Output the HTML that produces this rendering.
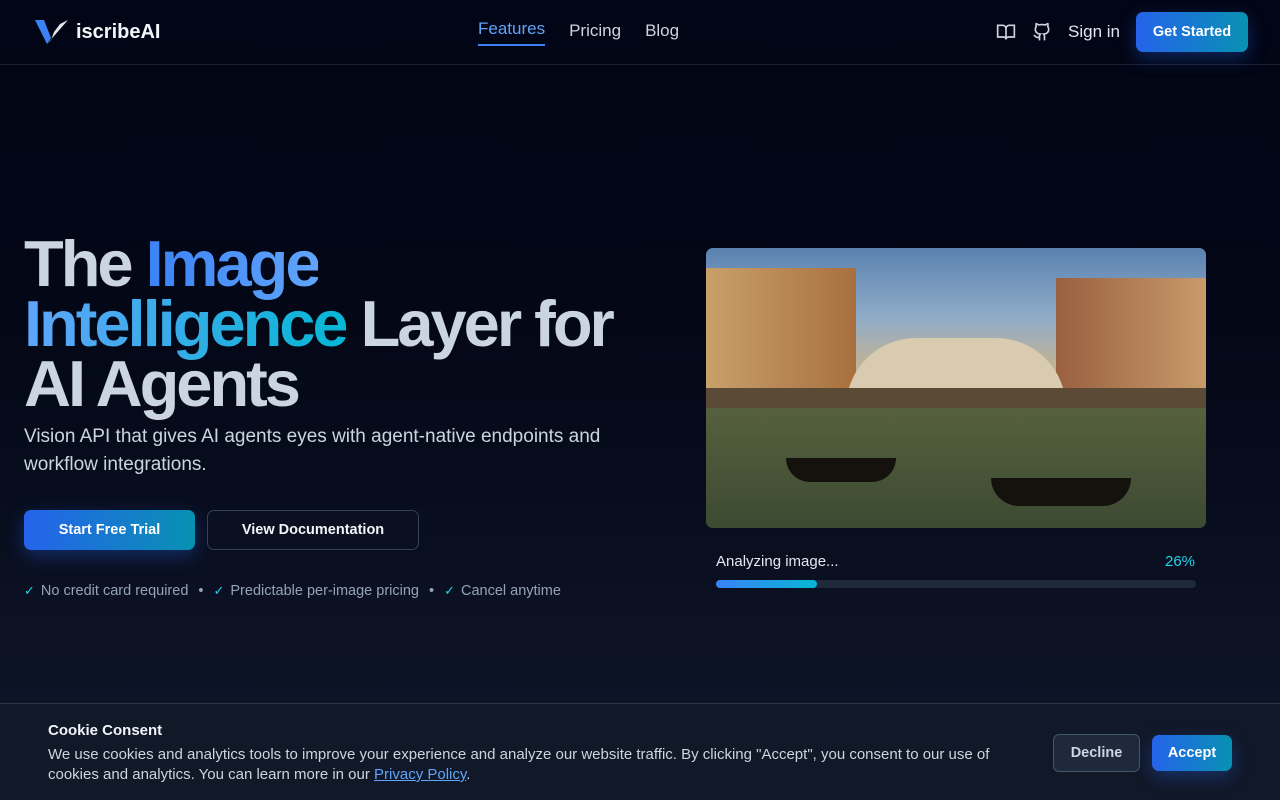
<!DOCTYPE html>
<html><head><meta charset="utf-8"><style>
*{margin:0;padding:0;box-sizing:border-box}
body{width:1280px;height:800px;overflow:hidden;font-family:"Liberation Sans",sans-serif;background:linear-gradient(180deg,#020515 0%,#030716 40%,#0c1224 80%,#0f1629 100%);color:#cbd5e1;position:relative}
.nav{position:absolute;top:0;left:0;right:0;height:65px;border-bottom:1px solid #1a1f2e}
.logo{position:absolute;left:34px;top:18px;display:flex;align-items:center;gap:6px;color:#f1f5f9;font-weight:bold;font-size:20px}
.links{position:absolute;left:478px;top:21px;display:flex;gap:24px;font-size:17px;color:#cbd5e1}
.links .a{color:#60a5fa;border-bottom:2px solid #3b82f6;padding-bottom:5px;margin-top:-2px}
.right{position:absolute;right:32px;top:12px;display:flex;align-items:center;gap:16px;font-size:17px}
.btn{background:linear-gradient(90deg,#2563eb,#0891b2);color:#fff;border-radius:7px;font-weight:bold;font-size:14.5px;display:flex;align-items:center;justify-content:center;box-shadow:0 6px 18px rgba(37,99,235,.35)}
h1{position:absolute;left:24px;top:234px;font-size:65px;line-height:60px;font-weight:bold;color:#cbd5e1;letter-spacing:-3px}
.g1{background:linear-gradient(90deg,#3b82f6,#60a5fa);-webkit-background-clip:text;color:transparent}
.g2{background:linear-gradient(90deg,#60a5fa,#06b6d4);-webkit-background-clip:text;color:transparent}
.sub{position:absolute;left:24px;top:423px;width:600px;font-size:19px;line-height:28px;color:#cbd5e1}
.checks{position:absolute;left:24px;top:583px;font-size:14.5px;color:#94a3b8;display:flex;gap:6px;align-items:center}
.ck{color:#22d3ee;font-size:13px}
.img{position:absolute;left:706px;top:248px;width:500px;height:280px;border-radius:7px;overflow:hidden;background:linear-gradient(180deg,#5a82b0 0%,#90acc8 25%,#c9b38d 45%,#9a6c48 55%,#5a5a3a 62%,#4c5a3c 75%,#3e4c34 100%)}
.cookie{position:absolute;left:0;right:0;top:703px;bottom:0;background:#111827;border-top:1px solid #2d3748}
</style></head><body>
<div class="nav">
<div class="logo"><svg width="36" height="28" viewBox="0 0 36 28"><path d="M1 2h9l7 18-4 6z" fill="#3b82f6"/><path d="M13 26 L34 2 L26 6 L20 14 L17 22z" fill="#e2e8f0"/></svg>iscribeAI</div>
<div class="links"><span class="a">Features</span><span>Pricing</span><span>Blog</span></div>
<div class="right">
<svg width="20" height="20" viewBox="0 0 24 24" fill="none" stroke="#cbd5e1" stroke-width="2"><path d="M2 4h6a4 4 0 0 1 4 4v13a3 3 0 0 0-3-3H2zM22 4h-6a4 4 0 0 0-4 4v13a3 3 0 0 1 3-3h7z"/></svg>
<svg width="20" height="20" viewBox="0 0 24 24" fill="none" stroke="#cbd5e1" stroke-width="2"><path d="M15 22v-4a4.8 4.8 0 0 0-1-3.5c3 0 6-2 6-5.5.08-1.25-.27-2.48-1-3.5.28-1.15.28-2.35 0-3.5 0 0-1 0-3 1.5-2.640-.5-5.36-.5-8 0C6 2 5 2 5 2c-.3 1.15-.3 2.35 0 3.5A5.4 5.4 0 0 0 4 9c0 3.5 3 5.5 6 5.5-.39.49-.68 1.05-.85 1.65S8.93 17.38 9 18v4M9 18c-4.51 2-5-2-7-2"/></svg>
<span style="color:#e2e8f0">Sign in</span>
<div class="btn" style="width:112px;height:40px">Get Started</div>
</div></div>
<h1>The <span class="g1">Image</span><br><span class="g2">Intelligence</span> Layer for<br>AI Agents</h1>
<div class="sub">Vision API that gives AI agents eyes with agent-native endpoints and workflow integrations.</div>
<div class="btn" style="position:absolute;left:24px;top:510px;width:171px;height:40px">Start Free Trial</div>
<div style="position:absolute;left:207px;top:510px;width:212px;height:40px;border:1px solid #374151;border-radius:7px;background:#0b1020;color:#f1f5f9;font-weight:bold;font-size:14.5px;display:flex;align-items:center;justify-content:center">View Documentation</div>
<div class="checks"><span class="ck">✓</span>No credit card required<span style="margin:0 4px">•</span><span class="ck">✓</span>Predictable per-image pricing<span style="margin:0 4px">•</span><span class="ck">✓</span>Cancel anytime</div>
<div class="img">
<div style="position:absolute;left:0;top:20px;width:150px;height:200px;background:linear-gradient(90deg,#c8a06a,#a8703e);"></div>
<div style="position:absolute;left:350px;top:30px;width:150px;height:190px;background:linear-gradient(90deg,#9a6040,#c89a6a)"></div>
<div style="position:absolute;left:140px;top:90px;width:220px;height:70px;border-radius:110px 110px 0 0;background:#d8cbb0"></div>
<div style="position:absolute;left:0;top:140px;width:500px;height:20px;background:#5a4a36"></div>
<div style="position:absolute;left:0;top:160px;width:500px;height:120px;background:linear-gradient(180deg,#56603e,#3c4a32)"></div>
<div style="position:absolute;left:80px;top:210px;width:110px;height:24px;border-radius:0 0 50px 50px;background:#15120e"></div>
<div style="position:absolute;left:285px;top:230px;width:140px;height:28px;border-radius:0 0 60px 60px;background:#15120e"></div>
</div>
<div style="position:absolute;left:716px;top:553px;font-size:15px;color:#e2e8f0">Analyzing image...</div>
<div style="position:absolute;left:1165px;top:553px;font-size:15px;color:#22d3ee">26%</div>
<div style="position:absolute;left:716px;top:580px;width:480px;height:8px;border-radius:4px;background:#1e293b"><div style="width:101px;height:8px;border-radius:4px;background:linear-gradient(90deg,#3b82f6,#06b6d4)"></div></div>
<div class="cookie">
<div style="position:absolute;left:48px;top:18px;font-weight:bold;font-size:15px;color:#f1f5f9">Cookie Consent</div>
<div style="position:absolute;left:48px;top:41px;width:980px;font-size:15px;line-height:20px;color:#cbd5e1">We use cookies and analytics tools to improve your experience and analyze our website traffic. By clicking "Accept", you consent to our use of cookies and analytics. You can learn more in our <span style="color:#60a5fa;text-decoration:underline">Privacy Policy</span>.</div>
<div style="position:absolute;left:1053px;top:30px;width:87px;height:38px;border:1px solid #475569;border-radius:6px;background:#1e293b;color:#cbd5e1;font-weight:bold;font-size:14.5px;display:flex;align-items:center;justify-content:center">Decline</div>
<div class="btn" style="position:absolute;left:1152px;top:31px;width:80px;height:36px">Accept</div>
</div>
</body></html>
